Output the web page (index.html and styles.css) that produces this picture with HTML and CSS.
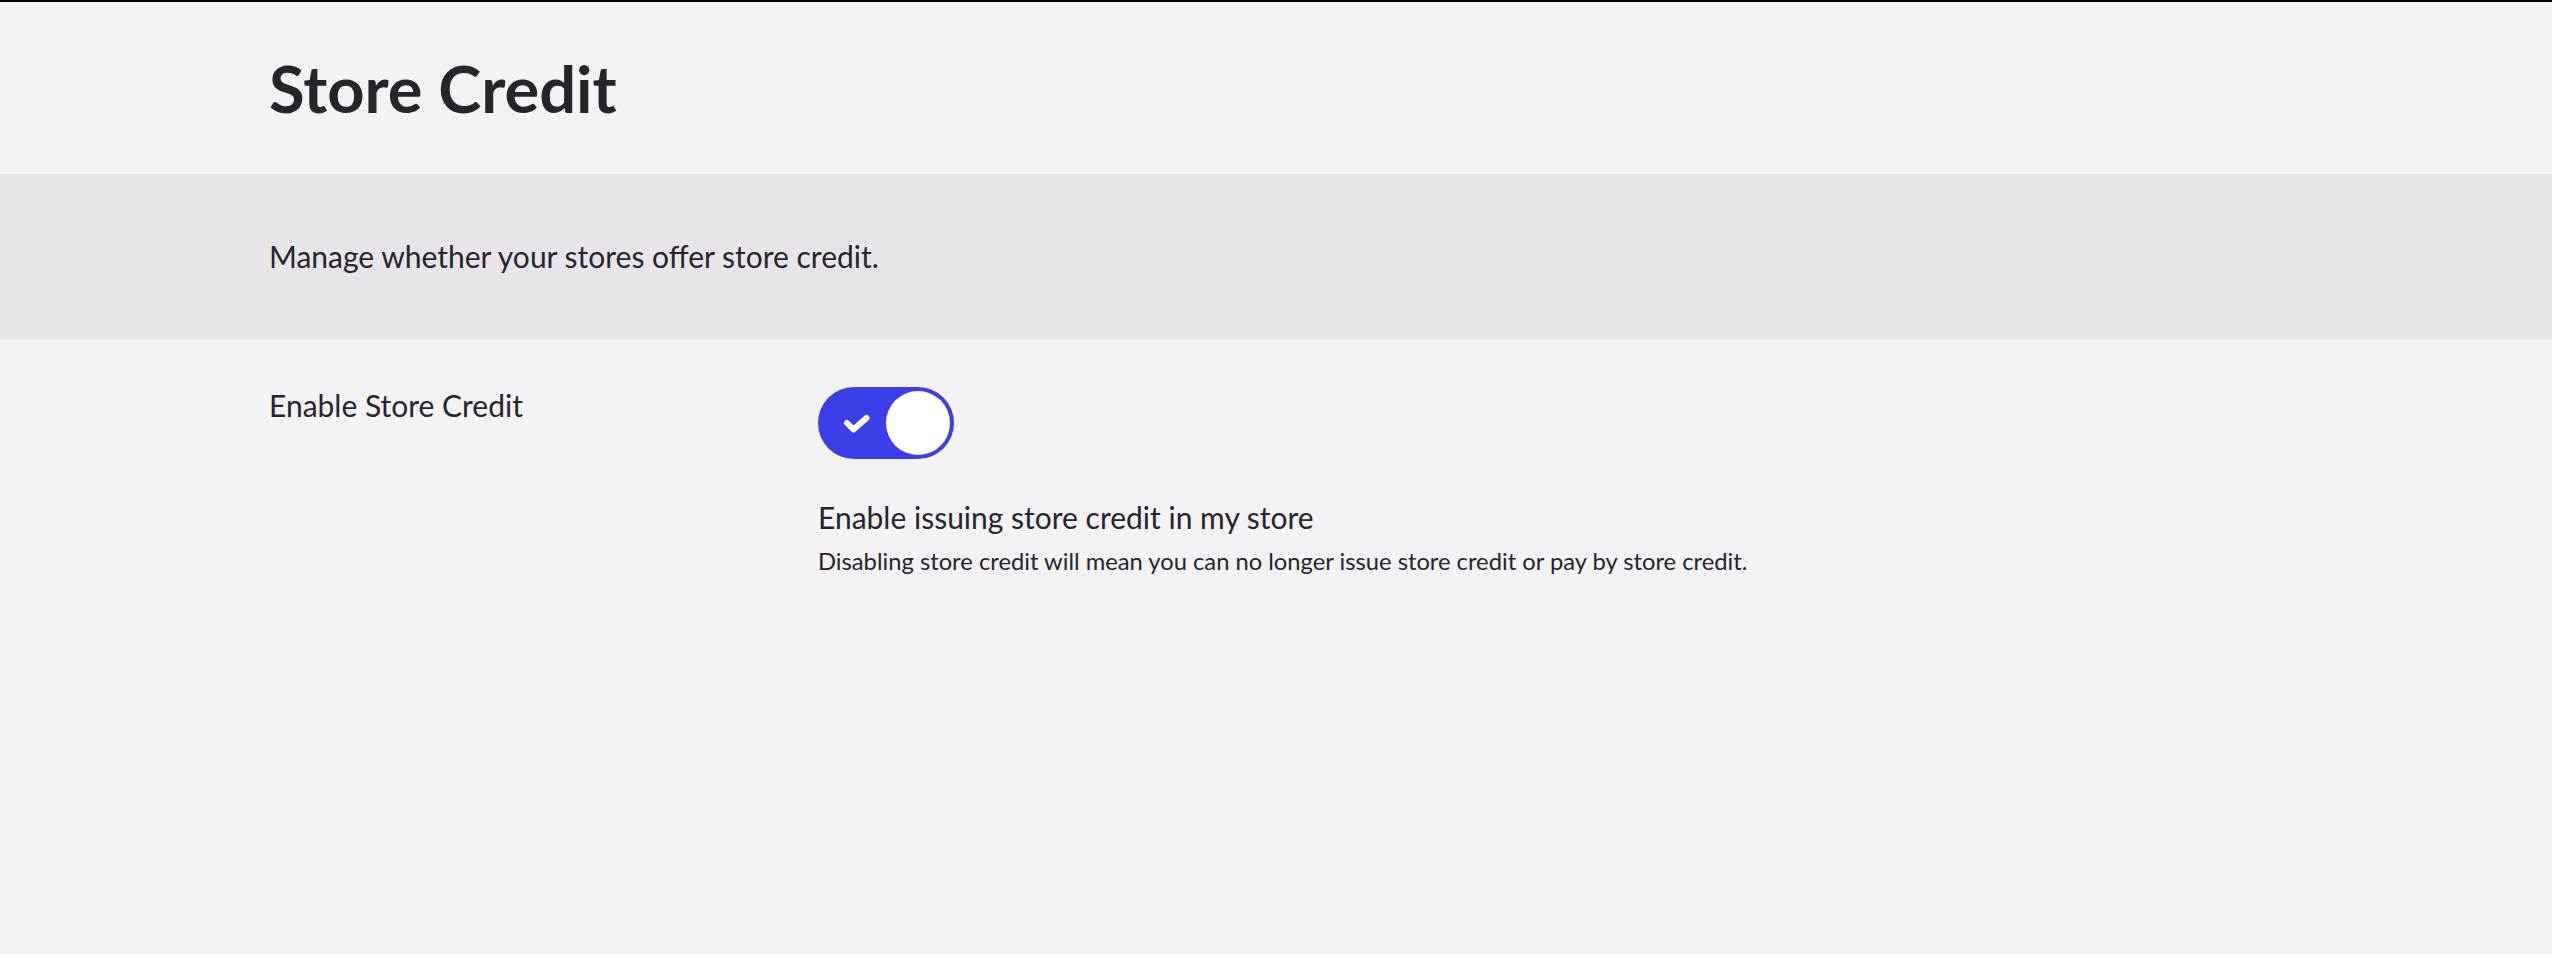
FILE: index.html
```html
<!DOCTYPE html>
<html lang="en">
<head>
    <meta charset="UTF-8">
    <meta name="viewport" content="width=device-width, initial-scale=1.0">
    <title>Store Credit</title>
    <link rel="stylesheet" href="styles.css">
</head>
<body>
    <header class="page-header">
        <h1>Store Credit</h1>
    </header>
    <section class="intro">
        <p>Manage whether your stores offer store credit.</p>
    </section>
    <form class="settings">
        <div class="setting-row">
            <label class="setting-label" for="storeCredit">Enable Store Credit</label>
            <div class="setting-control">
                <label class="toggle">
                    <input type="checkbox" id="storeCredit" checked>
                    <span class="toggle-track">
                        <svg class="toggle-check" width="30" height="24" viewBox="0 0 30 24">
                            <path d="M6 11 L12.5 17.5 L25.5 6" fill="none" stroke="#fff" stroke-width="6" stroke-linecap="round" stroke-linejoin="round"/>
                        </svg>
                        <span class="toggle-knob"></span>
                    </span>
                </label>
                <div class="toggle-title">Enable issuing store credit in my store</div>
                <div class="toggle-help">Disabling store credit will mean you can no longer issue store credit or pay by store credit.</div>
            </div>
        </div>
    </form>
</body>
</html>
```
FILE: styles.css
```css
html, body{
    margin: 0;
    padding: 0;
}
body{
    background-color: #f3f2f5;
    color: #27252b;
    font-family: Lato, "Open Sans", sans-serif;
    border-top: 2px solid #000;
    min-height: 952px;
}
.page-header{
    padding: 47px 269px;
}
.page-header h1{
    margin: 0;
    font-size: 65px;
    font-weight: 700;
    line-height: 1.2;
}
.intro{
    background-color: #e7e5e9;
    padding: 64px 269px 65px;
}
.intro p{
    margin: 0;
    font-size: 30px;
    line-height: 1.2;
}
.setting-row{
    display: flex;
    padding: 48px 269px;
}
.setting-label{
    width: 549px;
    flex-shrink: 0;
    font-size: 30px;
    line-height: 1.2;
}
.setting-control{
    display: flex;
    flex-direction: column;
    align-items: flex-start;
}
.toggle input{
    display: none;
}
.toggle-track{
    display: flex;
    align-items: center;
    justify-content: space-between;
    box-sizing: border-box;
    width: 136px;
    height: 72px;
    padding: 4px 4px 4px 23px;
    border-radius: 36px;
    background-color: #3b3de6;
    cursor: pointer;
}
.toggle-check{
    display: block;
    margin-top: 1px;
}
.toggle-knob{
    width: 64px;
    height: 64px;
    border-radius: 50%;
    background-color: #fff;
}
.toggle-title{
    margin-top: 40px;
    font-size: 30px;
    line-height: 1.2;
}
.toggle-help{
    margin-top: 12px;
    font-size: 23.75px;
    line-height: 1.2;
}
```
